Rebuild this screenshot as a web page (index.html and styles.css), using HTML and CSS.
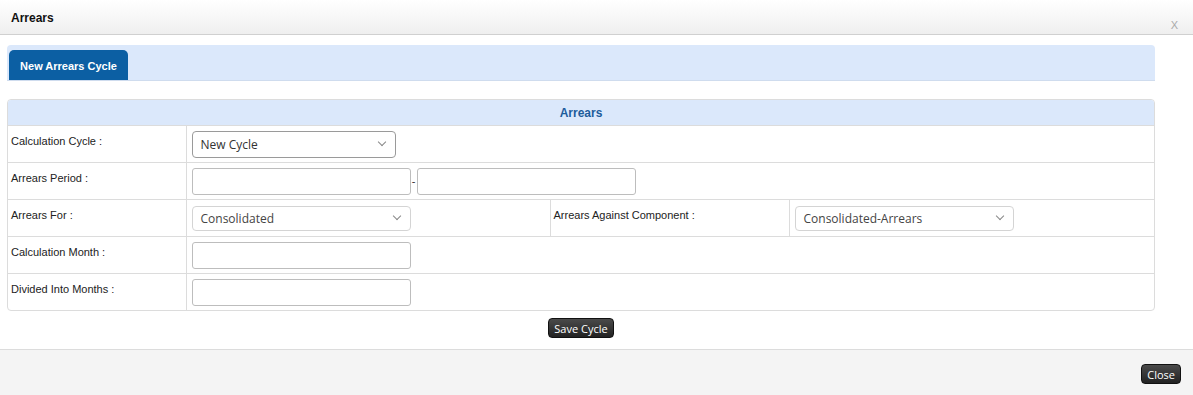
FILE: index.html
```html
<!DOCTYPE html>
<html lang="en">
<head>
  <meta charset="UTF-8">
  <title>Arrears</title>
  <link rel="stylesheet" href="styles.css">
</head>
<body>
  <div class="dialog">
    <!-- Title bar -->
    <div class="dialog-head">
      <span class="dialog-title">Arrears</span>
      <span class="dialog-x">X</span>
    </div>

    <div class="dialog-body">
      <div class="tabs">
        <div class="tab active">New Arrears Cycle</div>
      </div>

      <div class="panel">
        <div class="panel-head">Arrears</div>
        <table class="form">
          <colgroup>
            <col class="c-label">
            <col class="c-val">
            <col class="c-label2">
            <col>
          </colgroup>
          <tr>
            <td class="lbl">Calculation Cycle :</td>
            <td colspan="3">
              <div class="select sel-dark w-203"><span>New Cycle</span><i class="caret"></i></div>
            </td>
          </tr>
          <tr>
            <td class="lbl">Arrears Period :</td>
            <td colspan="3">
              <div class="period">
                <input type="text" class="txt">
                <span class="dash">-</span>
                <input type="text" class="txt">
              </div>
            </td>
          </tr>
          <tr>
            <td class="lbl">Arrears For :</td>
            <td>
              <div class="select w-219"><span>Consolidated</span><i class="caret"></i></div>
            </td>
            <td class="lbl">Arrears Against Component :</td>
            <td>
              <div class="select w-219"><span>Consolidated-Arrears</span><i class="caret"></i></div>
            </td>
          </tr>
          <tr>
            <td class="lbl">Calculation Month :</td>
            <td colspan="3"><input type="text" class="txt"></td>
          </tr>
          <tr>
            <td class="lbl">Divided Into Months :</td>
            <td colspan="3"><input type="text" class="txt"></td>
          </tr>
        </table>
      </div>

      <div class="actions">
        <button class="btn">Save Cycle</button>
      </div>
    </div>

    <div class="dialog-foot">
      <button class="btn">Close</button>
    </div>
  </div>
</body>
</html>
```

FILE: styles.css
```css
body {
  margin: 0;
  font-family: "Liberation Sans", Arial, sans-serif;
  font-size: 11px;
  color: #222;
  background: #fff;
}
.dialog {
  width: 1193px;
  height: 395px;
  display: flex;
  flex-direction: column;
}
.dialog-head {
  height: 34px;
  border-bottom: 1px solid #d0d0d0;
  background: linear-gradient(#ffffff, #efefef);
  display: flex;
  justify-content: space-between;
  align-items: flex-start;
  padding: 0 15px 0 11px;
}
.dialog-title {
  font-weight: bold;
  font-size: 12px;
  color: #111;
  margin-top: 11px;
}
.dialog-x {
  color: #aaa;
  font-size: 11px;
  margin-top: 19px;
}
.dialog-body {
  padding: 10px 38px 0 7px;
  flex: 1;
}
.tabs {
  height: 30px;
  padding: 5px 2px 0;
  background: #dbe8fb;
  border-radius: 4px 4px 0 0;
  border-bottom: 1px solid #cfdcee;
  display: flex;
  align-items: flex-end;
}
.tab {
  height: 30px;
  width: 119px;
  box-sizing: border-box;
  background: #0c5fa3;
  color: #fff;
  font-weight: bold;
  font-size: 11px;
  border-radius: 5px 5px 0 0;
  display: flex;
  align-items: center;
  justify-content: center;
  padding-top: 1px;
}
.panel {
  margin-top: 18px;
  border: 1px solid #dcdcdc;
  border-radius: 4px;
  overflow: hidden;
}
.panel-head {
  height: 25px;
  line-height: 27px;
  background: #dbe8fb;
  color: #1d5c9b;
  font-weight: bold;
  font-size: 12px;
  text-align: center;
  border-bottom: 1px solid #dcdcdc;
}
.form {
  width: 100%;
  border-collapse: collapse;
  table-layout: fixed;
}
.c-label { width: 178px; }
.c-val { width: 364px; }
.c-label2 { width: 239px; }
.form td {
  border-top: 1px solid #dcdcdc;
  border-left: 1px solid #dcdcdc;
  height: 36px;
  padding: 0 5px;
  vertical-align: middle;
}
.form tr:first-child td { border-top: none; }
.form td:first-child { border-left: none; }
.form td.lbl {
  vertical-align: top;
  padding: 9px 4px 0 3px;
  height: 27px;
  color: #222;
}
.select {
  height: 25px;
  box-sizing: border-box;
  border: 1px solid #d4d4d4;
  border-radius: 4px;
  display: flex;
  align-items: center;
  justify-content: space-between;
  padding: 0 10px 0 8px;
  font-family: "Open Sans", sans-serif;
  font-size: 12px;
  color: #444;
  background: #fff;
}
.sel-dark {
  border-color: #9a9a9a;
  height: 27px;
  color: #333;
}
.w-203 { width: 204px; }
.w-219 { width: 219px; }
.caret {
  width: 5px;
  height: 5px;
  border-right: 1px solid #888;
  border-bottom: 1px solid #888;
  transform: rotate(45deg);
  margin-top: -4px;
}
.txt {
  width: 219px;
  height: 27px;
  box-sizing: border-box;
  border: 1px solid #bdbdbd;
  border-radius: 3px;
  margin: 0;
  padding: 0 6px;
}
.period {
  display: flex;
  align-items: center;
}
.dash {
  width: 6px;
  text-align: center;
  color: #333;
}
.actions {
  display: flex;
  justify-content: center;
  padding-top: 7px;
}
.btn {
  font-family: "Open Sans", sans-serif;
  font-size: 11px;
  color: #fff;
  background: linear-gradient(#4a4a4a, #222);
  border: 1px solid #111;
  border-radius: 4px;
  height: 20px;
  padding: 0 5px;
  line-height: 17px;
}
.dialog-foot {
  height: 46px;
  border-top: 1px solid #dcdcdc;
  background: #f4f4f4;
  display: flex;
  justify-content: flex-end;
  align-items: flex-start;
  padding: 14px 12px 0 0;
  box-sizing: border-box;
  margin-top: 9px;
}
```
